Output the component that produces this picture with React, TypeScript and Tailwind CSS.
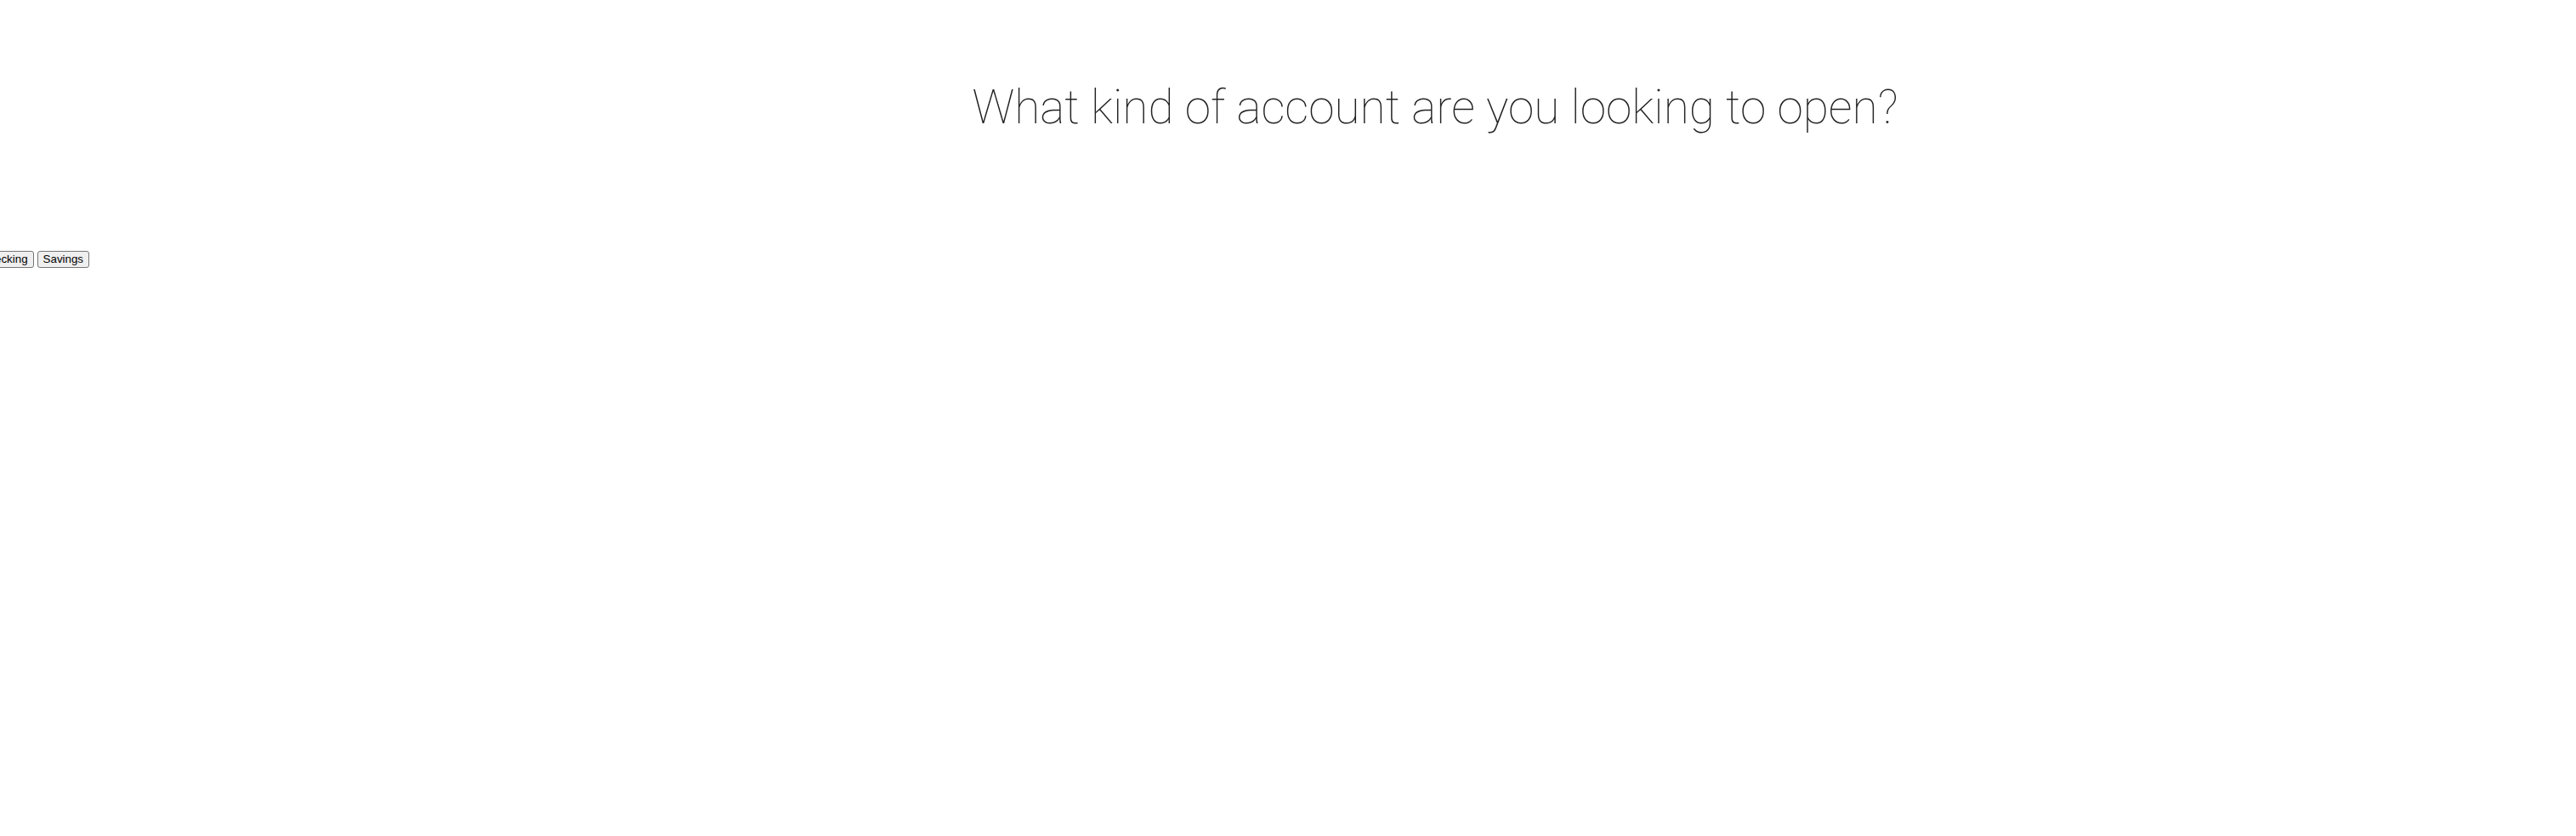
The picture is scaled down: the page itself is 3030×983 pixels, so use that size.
import React from "react";

export default function App() {
  return (
    <div className="min-h-screen w-full overflow-hidden bg-white">
      <h1
        className="mt-[94px] pl-[346px] text-center text-[55px] leading-[64px] font-thin text-[#222222]"
        style={{ fontFamily: "Roboto, 'Liberation Sans', sans-serif" }}
      >
        What kind of account are you looking to open?
      </h1>
      <div
        className="mt-[137px] ml-[-30px] flex gap-[4px]"
        style={{ fontFamily: "Arial, 'Liberation Sans', sans-serif" }}
      >
        <button className="rounded-[3px] border border-[#767676] bg-[#efefef] px-[6px] py-[1px] text-[13.33px] leading-[16px] text-black">
          Checking
        </button>
        <button className="rounded-[3px] border border-[#767676] bg-[#efefef] px-[6px] py-[1px] text-[13.33px] leading-[16px] text-black">
          Savings
        </button>
      </div>
    </div>
  );
}
